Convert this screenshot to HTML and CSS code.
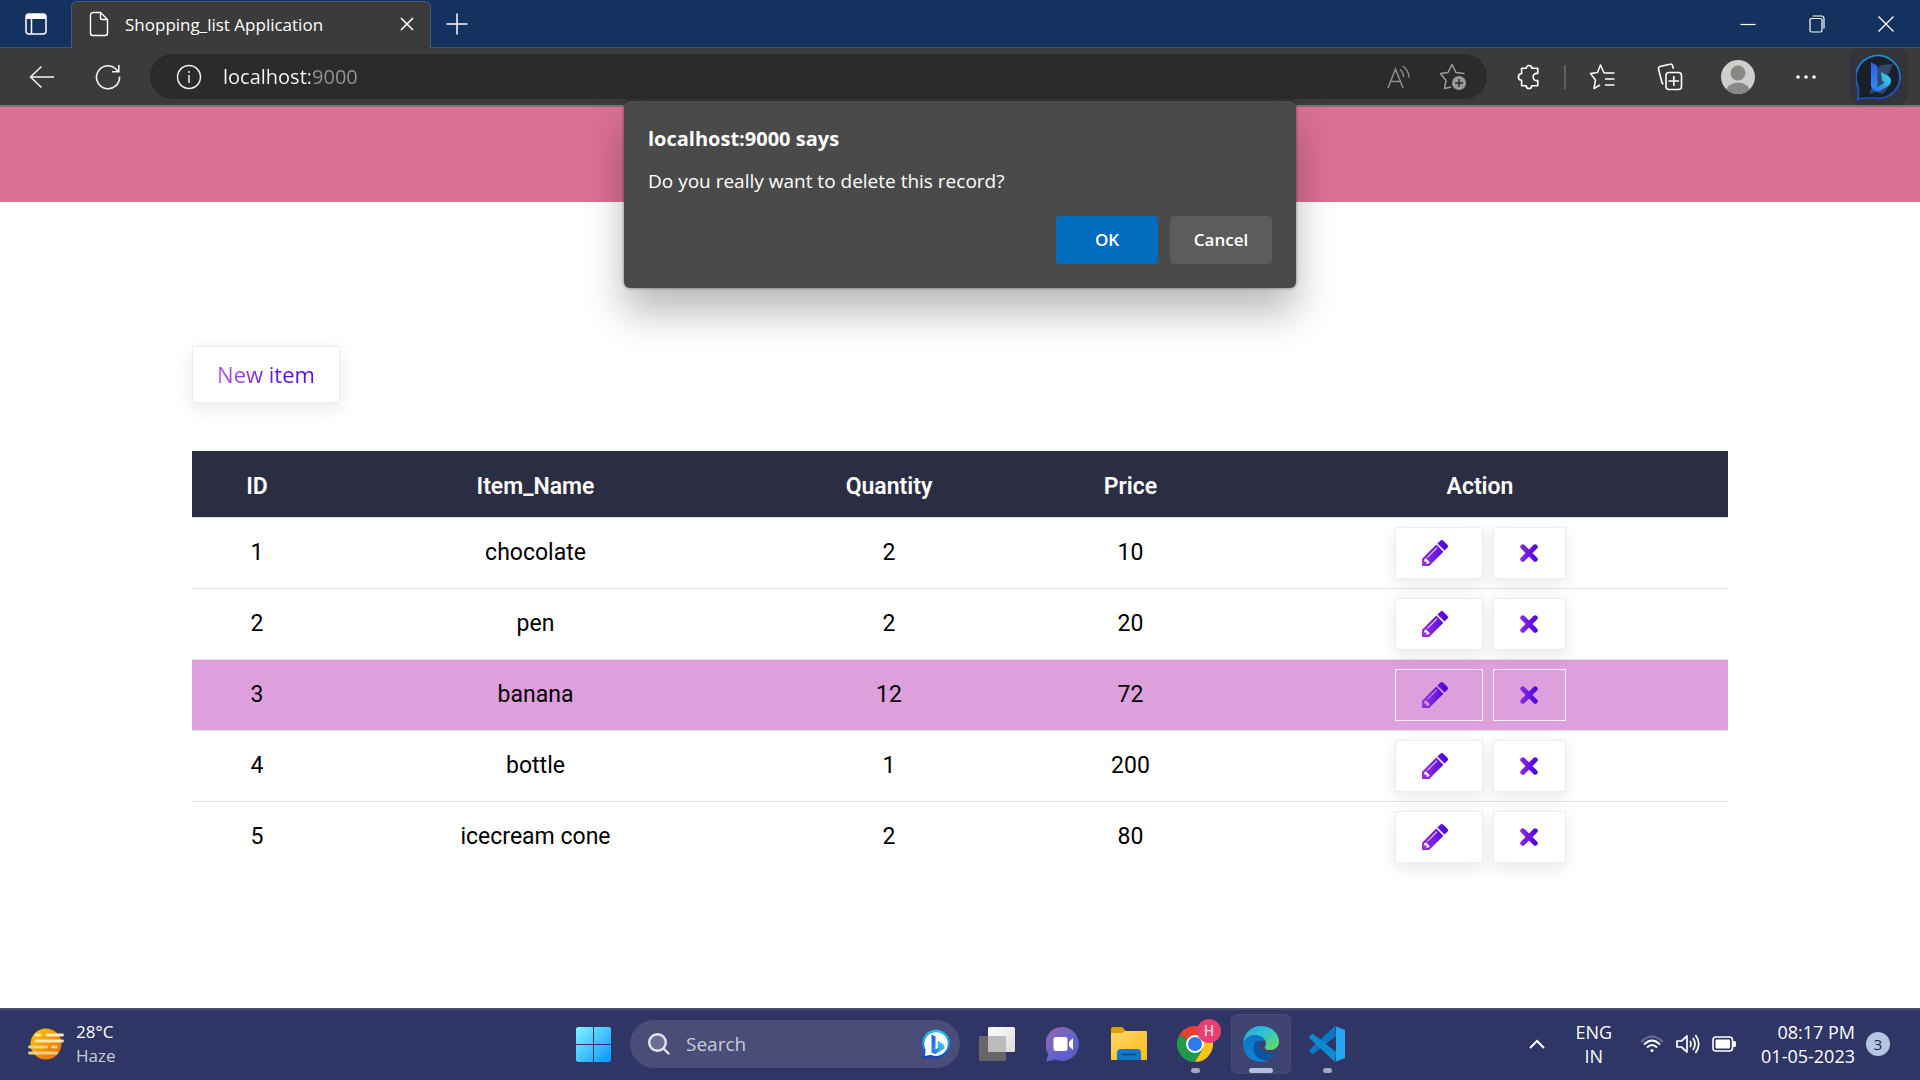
FILE: index.html
```html
<!DOCTYPE html>
<html lang="en">
<head>
<meta charset="utf-8">
<title>Shopping_list Application</title>
<link rel="stylesheet" href="styles.css">
</head>
<body>
<svg class="defs" width="0" height="0" aria-hidden="true">
  <defs>
    <linearGradient id="violet" x1="0" y1="0" x2="1" y2="0"><stop offset="0" stop-color="#9a35dd"/><stop offset="1" stop-color="#4a00e0"/></linearGradient>
    <linearGradient id="violet-x" gradientUnits="userSpaceOnUse" x1="0" y1="0" x2="18" y2="0"><stop offset="0" stop-color="#8e2de2"/><stop offset="1" stop-color="#4a00e0"/></linearGradient>
    <linearGradient id="bing" x1="0" y1="0" x2="0" y2="1"><stop offset="0" stop-color="#1b8fd0"/><stop offset="1" stop-color="#1b48c8"/></linearGradient>
    <linearGradient id="bing-b" x1="0" y1="0" x2="0" y2="1"><stop offset="0" stop-color="#2a5bea"/><stop offset="1" stop-color="#2f8ff5"/></linearGradient>
    <linearGradient id="bing-c" x1="1" y1="0" x2="0" y2="1"><stop offset="0" stop-color="#3fe0e8"/><stop offset="1" stop-color="#2466ee"/></linearGradient>
    <linearGradient id="bubble" x1="0" y1="0" x2="0" y2="1"><stop offset="0" stop-color="#25c4ee"/><stop offset="1" stop-color="#1545c0"/></linearGradient>
    <linearGradient id="sun" x1="0" y1="0" x2="1" y2="1"><stop offset="0" stop-color="#fcd000"/><stop offset="1" stop-color="#e8600a"/></linearGradient>
    <linearGradient id="win" gradientUnits="userSpaceOnUse" x1="0" y1="0" x2="35" y2="35"><stop offset="0" stop-color="#80f4ff"/><stop offset="1" stop-color="#0a94ff"/></linearGradient>
    <linearGradient id="chat" x1="0" y1="0" x2="1" y2="1"><stop offset="0" stop-color="#9c6aa8"/><stop offset="0.5" stop-color="#6a62c8"/><stop offset="1" stop-color="#4f58d0"/></linearGradient>
    <linearGradient id="folder" x1="0" y1="0" x2="1" y2="1"><stop offset="0" stop-color="#ffd96b"/><stop offset="1" stop-color="#fbb917"/></linearGradient>
    <linearGradient id="edge-top" x1="0" y1="0" x2="1" y2="1"><stop offset="0" stop-color="#2a9fe8"/><stop offset="0.45" stop-color="#2fc3d0"/><stop offset="1" stop-color="#6be04a"/></linearGradient>
    <linearGradient id="edge-low" x1="0" y1="0" x2="0" y2="1"><stop offset="0" stop-color="#1272c0"/><stop offset="1" stop-color="#0a86dc"/></linearGradient>
    <linearGradient id="page-white" x1="0" y1="0" x2="1" y2="1"><stop offset="0" stop-color="#fff"/><stop offset="1" stop-color="#dcdcdc"/></linearGradient>
    <symbol id="pencil" viewBox="0 21 1515 1515"><path fill="url(#violet)" d="M363 1408l91-91-235-235-91 91v107h128v128h107zm523-928q0-22-22-22-10 0-17 7l-542 542q-7 7-7 17 0 22 22 22 10 0 17-7l542-542q7-7 7-17zm-54-192l416 416-832 832h-416v-416zm683 96q0 53-37 90l-166 166-416-416 166-165q36-38 90-38 53 0 91 38l235 234q37 39 37 91z"/></symbol>
    <symbol id="cross" viewBox="0 0 18 18"><path fill="none" stroke="url(#violet-x)" stroke-width="5" stroke-linecap="round" d="M2.8 2.8L15.2 15.2M15.2 2.8L2.8 15.2"/></symbol>
  </defs>
</svg>

<div class="tabstrip">
  <button class="tab-actions" aria-label="Tab actions">
    <svg width="22" height="22" viewBox="0 0 22 22" fill="none" stroke="#fff" stroke-width="1.5"><rect x="1" y="1" width="20" height="20" rx="3"/><path d="M6.5 6v15"/><path d="M1 3.5h20" stroke-width="5"/></svg>
  </button>
  <div class="tab">
    <svg width="20" height="26" viewBox="0 0 20 26" fill="none" stroke="#fff" stroke-width="1.4"><path d="M11.500 1.500H4a2.500 2.500 0 0 0-2.500 2.500v18a2.500 2.500 0 0 0 2.500 2.500h12a2.500 2.500 0 0 0 2.500-2.500V8.500zV7a1.500 1.500 0 0 0 1.500 1.500h5.500"/></svg>
    <span class="tab-title">Shopping_list Application</span>
    <button aria-label="Close tab"><svg width="14" height="14" viewBox="0 0 14 14" stroke="#fff" stroke-width="1.6"><path d="M1 1l12 12M13 1L1 13"/></svg></button>
  </div>
  <button class="new-tab" aria-label="New tab"><svg width="22" height="22" viewBox="0 0 22 22" stroke="#fff" stroke-width="1.5"><path d="M11 0.500v21M0.500 11h21"/></svg></button>
  <div class="window-buttons">
    <button aria-label="Minimize"><svg width="16" height="16" viewBox="0 0 16 16" stroke="#fff" stroke-width="1.200"><path d="M0.500 8.500h15"/></svg></button>
    <button aria-label="Restore"><svg width="16" height="18" viewBox="0 0 16 18" fill="none" stroke="#fff" stroke-width="1.200"><rect x="1" y="3.500" width="12" height="13.500" rx="1.500"/><path d="M3.500 1h9a2.500 2.500 0 0 1 2.500 2.500v10"/></svg></button>
    <button aria-label="Close"><svg width="16" height="18" viewBox="0 0 16 18" stroke="#fff" stroke-width="1.300"><path d="M0.500 1.500l15 15M15.500 1.500l-15 15"/></svg></button>
  </div>
</div>

<div class="toolbar">
  <button aria-label="Back"><svg width="26" height="24" viewBox="0 0 26 24" fill="none" stroke="#f5f5f5" stroke-width="1.500"><path d="M25 12H1.500M12.500 1.500L1.500 12l11 10.500"/></svg></button>
  <button aria-label="Refresh"><svg width="26" height="26" viewBox="0 0 26 26" fill="none" stroke="#f5f5f5" stroke-width="1.600"><path d="M24.500 12.500A11.500 11.500 0 1 1 20.500 4.500L23 7.500M23.800 1v6.800H17"/></svg></button>
  <div class="address">
    <svg width="26" height="26" viewBox="0 0 26 26" fill="none" stroke="#f0f0f0" stroke-width="1.500"><circle cx="13" cy="13" r="11.500"/><path d="M13 11v8M13 7v2"/></svg>
    <input class="url" type="text" aria-label="Address" value="localhost:9000">
    <button aria-label="Read aloud"><svg width="24" height="24" viewBox="0 0 24 24" fill="none" stroke="#8f8f8f" stroke-width="1.500"><path d="M1 23L8.500 4 16 23M3.800 16.500h9.500M13 4.500q3.500 3 3.500 7.500M15.500 1q6.500 4.500 6.500 11.500"/></svg></button>
    <button aria-label="Add to favorites"><svg width="28" height="28" viewBox="0 0 28 28" fill="none" stroke="#9a9a9a" stroke-width="1.500" stroke-linejoin="round"><path d="M12 24l-6.500 1.500L7 17.500 1.500 10.500l7.500-1L13 1.500l4 8 8.500 1"/><circle cx="20" cy="20" r="7" fill="#9a9a9a" stroke="none"/><path d="M20 16v8M16 20h8" stroke="#2b2b2b"/></svg></button>
  </div>
  <button class="extensions" aria-label="Extensions"><svg width="24" height="26" viewBox="0 0 26 28" fill="none" stroke="#fff" stroke-width="1.800" stroke-linejoin="round"><path d="M5 4.500h5a3 3 0 0 1 6 0h6.500v5.500h-1a4 4 0 0 0 0 8h1v5.500H16a3 3 0 0 1-6 0H5v-6a3.500 3.500 0 0 1 0-7z"/></svg></button>
  <span class="divider"></span>
  <div class="tools">
    <button aria-label="Favorites"><svg width="26" height="28" viewBox="0 0 26 28" fill="none" stroke="#fff" stroke-width="1.500" stroke-linejoin="round"><path d="M15 10L11.500 2 8.500 9.500 1.500 10.500 6.500 17 5 25.500l6-3.500M15 10h10.500M16 16h9.500M16 22h9.500"/></svg></button>
    <button aria-label="Collections"><svg width="26" height="28" viewBox="0 0 26 28" fill="none" stroke="#fff" stroke-width="1.600" stroke-linejoin="round"><rect x="9" y="9.500" width="15.500" height="17" rx="3"/><path d="M16.800 13v10M11.500 18h10.500M6.500 21a2 2 0 0 1-1.500-1.500L1.500 6a2 2 0 0 1 1.500-2.500L13 1.200a2 2 0 0 1 2.500 1.500l1 3"/></svg></button>
    <button aria-label="Profile"><svg width="34" height="34" viewBox="0 0 34 34"><clipPath id="av"><circle cx="17" cy="17" r="17"/></clipPath><g clip-path="url(#av)"><path fill="#d0cecb" d="M0 0h34v34H0z"/><circle cx="17" cy="13" r="7.500" fill="#8a8886"/><ellipse cx="17" cy="32" rx="12" ry="9.500" fill="#8a8886"/></g></svg></button>
    <button aria-label="Settings and more"><svg width="20" height="6" viewBox="0 0 20 6" fill="#fff"><circle cx="2" cy="3" r="1.800"/><circle cx="10" cy="3" r="1.800"/><circle cx="18" cy="3" r="1.800"/></svg></button>
    <button class="bing" aria-label="Discover"><svg width="46" height="46" viewBox="0 0 46 46"><path fill="#1b1f2b" stroke="url(#bing)" stroke-width="1.800" d="M1.500 45q2-7 0-14A22 21.500 0 1 1 23 44.500c-8-1.500-14 0-21.500.5z"/><path fill="#2f4a66" d="M13 40l6-14-2-8 8-7 12-1-6 14 4 6-8 10-8-2z"/><path fill="url(#bing-b)" d="M15 8l6.500 4v20l-3 4-3.500-3.500z"/><path fill="url(#bing-c)" d="M25 18l8 4.500q4 4 0 9L24 37q-6 1.500-8.500-3.500 5 1.500 13-5l-2.500-2z"/></svg></button>
  </div>
</div>

<div class="page">
  <header class="banner"></header>
  <main class="content">
    <button class="ghost new-item"><span>New item</span></button>
    <table class="items">
      <colgroup><col class="c-id"><col class="c-name"><col class="c-qty"><col class="c-price"><col class="c-action"></colgroup>
      <thead><tr><th>ID</th><th>Item_Name</th><th>Quantity</th><th>Price</th><th>Action</th></tr></thead>
      <tbody>
        <tr><td>1</td><td>chocolate</td><td>2</td><td>10</td><td><div class="actions"><button class="ghost edit" aria-label="Edit chocolate"><svg width="26" height="26"><use href="#pencil"/></svg></button><button class="ghost delete" aria-label="Delete chocolate"><svg width="18" height="18"><use href="#cross"/></svg></button></div></td></tr>
        <tr><td>2</td><td>pen</td><td>2</td><td>20</td><td><div class="actions"><button class="ghost edit" aria-label="Edit pen"><svg width="26" height="26"><use href="#pencil"/></svg></button><button class="ghost delete" aria-label="Delete pen"><svg width="18" height="18"><use href="#cross"/></svg></button></div></td></tr>
        <tr class="active"><td>3</td><td>banana</td><td>12</td><td>72</td><td><div class="actions"><button class="ghost edit" aria-label="Edit banana"><svg width="26" height="26"><use href="#pencil"/></svg></button><button class="ghost delete" aria-label="Delete banana"><svg width="18" height="18"><use href="#cross"/></svg></button></div></td></tr>
        <tr><td>4</td><td>bottle</td><td>1</td><td>200</td><td><div class="actions"><button class="ghost edit" aria-label="Edit bottle"><svg width="26" height="26"><use href="#pencil"/></svg></button><button class="ghost delete" aria-label="Delete bottle"><svg width="18" height="18"><use href="#cross"/></svg></button></div></td></tr>
        <tr><td>5</td><td>icecream cone</td><td>2</td><td>80</td><td><div class="actions"><button class="ghost edit" aria-label="Edit icecream cone"><svg width="26" height="26"><use href="#pencil"/></svg></button><button class="ghost delete" aria-label="Delete icecream cone"><svg width="18" height="18"><use href="#cross"/></svg></button></div></td></tr>
      </tbody>
    </table>
  </main>
</div>

<dialog class="confirm" open aria-labelledby="confirm-title">
  <h2 id="confirm-title">localhost:9000 says</h2>
  <p>Do you really want to delete this record?</p>
  <div class="confirm-buttons"><button class="primary">OK</button><button>Cancel</button></div>
</dialog>

<footer class="taskbar">
  <button class="weather">
    <svg width="36" height="36" viewBox="0 0 36 36"><circle cx="18" cy="18" r="15.500" fill="url(#sun)"/><path fill="none" stroke="#fbe7b0" stroke-width="2.800" stroke-linecap="round" d="M8 9h4M19 9h15.500M8 15h26.500"/><path fill="none" stroke="#f0cf80" stroke-width="2.800" stroke-linecap="round" d="M1.500 21h17M24.500 21h4M1.500 27h27"/></svg>
    <span class="lines"><span>28°C</span><span class="dim">Haze</span></span>
  </button>
  <div class="apps">
    <button aria-label="Start"><svg width="35" height="35" viewBox="0 0 35 35" fill="url(#win)"><path d="M1.500 0H17v17H0V1.500zM18 0h15.500L35 1.500V17H18zM0 18h17v17H1.500L0 33.500zM18 18h17v15.500L33.500 35H18z"/></svg></button>
    <label class="search">
      <svg width="22" height="22" viewBox="0 0 22 22" fill="none" stroke="#e4e4ea" stroke-width="2.400" stroke-linecap="round"><circle cx="9.500" cy="9.500" r="8.300" fill="#6b6e92"/><path d="M15.500 15.500l5 5"/></svg>
      <input type="text" placeholder="Search" aria-label="Search">
      <svg width="30" height="30" viewBox="0 0 30 30"><path fill="#fff" stroke="url(#bubble)" stroke-width="2.400" d="M1.500 28.500l1-7.500A13 13 0 1 1 9 27z"/><path fill="url(#bing-b)" d="M9.500 5.500l4 2v14l-4 3z"/><path fill="url(#bing-c)" d="M15.500 11.500l7 4.500v3.500l-9 5.500q-3 0-4-3l6.500-3z"/></svg>
    </label>
    <button aria-label="Task view"><svg width="36" height="34" viewBox="0 0 36 34"><rect y="9" width="27" height="25" rx="1.500" fill="#666"/><rect x="9" width="27" height="25" rx="1.500" fill="url(#page-white)"/><path fill="#bcbcbc" d="M9 9h18v16H9z"/></svg></button>
    <button aria-label="Chat"><svg width="34" height="35" viewBox="0 0 34 35"><path fill="url(#chat)" d="M17 0a17 17 0 1 1-8 32.500L1 34.500q-1 0-.5-1.500L2.500 27A17 17 0 0 1 17 0z"/><rect x="7.500" y="10" width="14" height="14" rx="2.500" fill="#fff"/><path fill="#fff" d="M23 15l4-4v12l-4-4z"/></svg></button>
    <button aria-label="File Explorer"><svg width="36" height="34" viewBox="0 0 36 34"><path fill="#e0a000" d="M0 2q0-2 2-2h9l4 4v5H0z"/><path fill="url(#folder)" d="M0 6h11l4-2h20q1 0 1 1v28H0z"/><path fill="#0f78cc" d="M6 33v-7q0-4 4-4h16q4 0 4 4v7z"/><path stroke="#104a80" stroke-width="1.600" d="M11 27.500h14"/></svg></button>
    <button class="running" aria-label="Google Chrome"><svg width="36" height="36" viewBox="0 0 36 36"><path fill="#e8402f" d="M18 18L2.400 9A18 18 0 0 1 33.600 9z"/><path fill="#229a48" d="M18 18l8 4.500L18 36A18 18 0 0 1 2.400 9z"/><path fill="#fcc31a" d="M18 9h15.600A18 18 0 0 1 18 36l8-13.500z"/><circle cx="18" cy="18" r="9" fill="#fff"/><circle cx="18" cy="18" r="7" fill="#2f78ee"/></svg><span class="profile">H</span></button>
    <button class="running current" aria-label="Microsoft Edge"><svg width="36" height="36" viewBox="0 0 36 36"><path fill="url(#edge-low)" d="M0 18C1 10 8 7 13 8c6 .5 9 4 9 7-6-2-10 2-10 7 0 7 6 13 13 13-3 1-7 1-10 .5C6 34 0 27 0 18z"/><path fill="#0b55a2" d="M14 15c-5 3-5 11 0 16 5 4.500 11 4 15 .5 2-1.500 3-3 4-4.500q.5-1-1-.5c-8 3-16-2-16-7 0-2 .5-3 1-4.500z"/><path fill="url(#edge-top)" d="M0 17C1 7 8 0 18 0c11 0 18 8 18 15.500C36 21 32 24 27.500 24c-4 0-6.500-1.500-5.500-3 3-5-1-11-8.500-12C7 8.500 2 12 0 17z"/></svg></button>
    <button class="running" aria-label="Visual Studio Code"><svg width="36" height="36" viewBox="0 0 36 36"><path fill="#0b78c4" d="M26 0L.8 23.500q-1.300 1.200 0 2.500L2.500 27.500q1 1 2.300 0L27 10z"/><path fill="#1089d4" d="M26 36L.8 12.500q-1.300-1.200 0-2.500L2.500 8.500q1-1 2.300 0L27 26z"/><path fill="#27a5f0" d="M26 0l10 4v28l-10 4q1-.5 1-2V2q0-1.500-1-2z"/></svg></button>
  </div>
  <div class="tray">
    <button class="more" aria-label="Show hidden icons"><svg width="16" height="10" viewBox="0 0 16 10" fill="none" stroke="#fff" stroke-width="2"><path d="M1 9l7-7 7 7"/></svg></button>
    <button class="lines language"><span>ENG</span><span>IN</span></button>
    <button class="status" aria-label="Network, volume, battery">
      <svg width="24" height="18" viewBox="0 0 24 18" fill="none" stroke="#fff" stroke-width="1.800"><path stroke="#6b6f94" d="M1 7q11-11 22 0"/><path d="M4 9.500q8-8 16 0M7 12.500q5-5 10 0"/><circle cx="12" cy="15.500" r="1.600" fill="#fff" stroke="none"/></svg>
      <svg width="24" height="22" viewBox="0 0 24 22" fill="none" stroke="#fff" stroke-width="1.700" stroke-linejoin="round"><path d="M1 8h4.500L11 3v16l-5.500-5H1zM14 8q2 3 0 6M17 5q4 6 0 12M19.500 2q6.500 9 0 18"/></svg>
      <svg width="24" height="16" viewBox="0 0 24 16"><rect x="1" y="1" width="19.500" height="14" rx="3" fill="none" stroke="#fff" stroke-width="1.600"/><rect x="3.500" y="3.500" width="14.500" height="9" rx="1" fill="#fff"/><path fill="#fff" d="M21 5h1.500q1.500 0 1.500 1.500v3q0 1.500-1.500 1.500H21z"/></svg>
    </button>
    <button class="lines clock"><span>08:17 PM</span><span>01-05-2023</span></button>
    <button class="count" aria-label="3 notifications">3</button>
  </div>
</footer>
</body>
</html>
```
FILE: styles.css
```css
* { box-sizing: border-box; }

body {
  margin: 0;
  min-height: 100vh;
  display: flex;
  flex-direction: column;
  position: relative;
  background: #fff;
  color: #fff;
  font-family: "Open Sans", "Noto Sans", sans-serif;
  font-size: 17px;
}

.defs { position: absolute; }

svg { display: block; flex: none; }

button {
  margin: 0;
  padding: 0;
  border: 0;
  background: none;
  color: inherit;
  font: inherit;
  display: flex;
  align-items: center;
  justify-content: center;
}

input {
  min-width: 0;
  padding: 0;
  border: 0;
  outline: 0;
  background: none;
  color: inherit;
  font: inherit;
}

/* Tab strip */
.tabstrip {
  display: flex;
  height: 48px;
  background: #133260;
  border-bottom: 1px solid #3d5170;
}
.tab-actions { width: 71px; }
.tab {
  width: 360px;
  height: 47px;
  margin: 1px 0 -1px;
  padding: 0 16px 2px 17px;
  display: flex;
  align-items: center;
  gap: 16px;
  background: #3b3b3b;
  border: 1px solid #4a5a78;
  border-bottom: 0;
  border-radius: 6px 6px 0 0;
}
.tab-title { flex: 1; }
.new-tab { width: 52px; }
.window-buttons { margin-left: auto; display: flex; }
.window-buttons button { width: 69px; }

/* Toolbar */
.toolbar {
  display: flex;
  align-items: center;
  height: 59px;
  padding: 0 12px 0 18px;
  background: #3b3b3b;
  border-bottom: 2px solid #767676;
}
.toolbar > button { width: 48px; height: 48px; margin-right: 18px; }
.address {
  flex: 1;
  height: 45px;
  padding: 0 10px 0 26px;
  display: flex;
  align-items: center;
  border-radius: 23px;
  background: #2b2b2b;
}
.address button { width: 48px; height: 44px; margin-left: 6px; }
.url {
  flex: 1;
  margin-left: 21px;
  font-size: 20px;
  color: transparent;
  background: linear-gradient(90deg, #fff 87px, #949494 87px);
  background-clip: text;
  -webkit-background-clip: text;
}
.toolbar > .extensions { margin: 0 0 0 18px; }
.divider { width: 2px; height: 24px; margin: 0 12px 0 11px; background: #606060; }
.tools { display: flex; align-items: center; gap: 20px; }
.tools button { width: 48px; height: 48px; }
.tools .bing { width: 58px; height: 57px; border-radius: 10px; background: #33343a; }

/* Page */
.page { flex: 1; background: #fff; color: #000; }
.banner { height: 95px; background: #db7093; }
.content { width: 80%; margin: 0 auto; padding: 144px 0 48px; }

.ghost {
  background: transparent;
  border: 1px solid #e7eef4;
  box-shadow: 0 5px 15px rgba(50, 70, 90, 0.12);
}
.new-item { width: 148px; height: 57px; margin-bottom: 48px; padding-bottom: 2px; font-size: 22px; background: #fff; }
.new-item span {
  color: transparent;
  background: linear-gradient(90deg, #b05ae6, #5a0ce0 70%, #5a0ce0);
  background-clip: text;
  -webkit-background-clip: text;
}

.items {
  width: 100%;
  table-layout: fixed;
  border-collapse: collapse;
  font-family: Roboto, sans-serif;
  font-size: 23px;
  text-align: center;
}
.c-id { width: 130px; }
.c-name { width: 427px; }
.c-qty { width: 280px; }
.c-price { width: 203px; }
.c-action { width: 496px; }
.items th { height: 66px; padding: 6px 0 0; background: #2b2d42; color: #fff; font-weight: 600; }
.items td { height: 71px; padding: 0; border-top: 1px solid #dee2e6; font-weight: 400; }
.items .active { background: #dda0dd; }
.actions { display: flex; justify-content: center; gap: 10px; }
.actions .ghost { height: 52px; background: #fff; }
.actions .edit { width: 88px; padding-left: 26px; justify-content: flex-start; }
.actions .delete { width: 73px; }
.active .actions .ghost { background: transparent; border-color: #f3f3fa; box-shadow: none; }

/* Confirmation dialog */
.confirm {
  position: absolute;
  top: 101px;
  left: 0;
  right: 0;
  width: 672px;
  margin: 0 auto;
  padding: 22px 24px 24px;
  border: 0;
  border-radius: 6px;
  background: #4a4a4a;
  color: #fff;
  box-shadow: 0 0 3px rgba(0, 0, 0, 0.5), 0 24px 40px rgba(0, 0, 0, 0.28);
}
.confirm h2 { margin: 0 0 12px; font-size: 20px; line-height: 32px; font-weight: 700; }
.confirm p { margin: 0 0 21px; font-size: 19px; line-height: 28px; }
.confirm-buttons { display: flex; justify-content: flex-end; gap: 12px; }
.confirm button { width: 102px; height: 48px; padding-bottom: 2px; border-radius: 4px; background: #5c5c5c; font-weight: 600; }
.confirm .primary { background: #006cbe; }

/* Taskbar */
.taskbar {
  display: grid;
  grid-template-columns: 1fr auto 1fr;
  align-items: center;
  height: 72px;
  padding-bottom: 2px;
  background: #2f3565;
  border-top: 2px solid #4a4d70;
}
.lines { display: flex; flex-direction: column; align-items: center; line-height: 24px; }
.weather { justify-self: start; margin-left: 28px; gap: 12px; }
.weather .lines { align-items: flex-start; }
.dim { color: #c9cbda; }
.apps { display: flex; gap: 6px; align-items: center; }
.apps > button { position: relative; width: 60px; height: 60px; }
.search {
  width: 330px;
  height: 48px;
  margin: 0 1px;
  padding: 0 8px 0 18px;
  display: flex;
  align-items: center;
  gap: 16px;
  border-radius: 24px;
  background: #494d78;
}
.search input { flex: 1; font-size: 19px; }
.search input::placeholder { color: #c9cbda; opacity: 1; }
.running::after {
  content: "";
  position: absolute;
  bottom: 1px;
  left: 50%;
  width: 9px;
  margin-left: -4px;
  height: 5px;
  border-radius: 3px;
  background: #a4a6bf;
}
.current { border: 1px solid #474b76; border-radius: 6px; background: #3e436f; }
.current::after { bottom: 0; width: 24px; margin-left: -12px; background: #afc3de; }
.profile {
  position: absolute;
  top: 5px;
  right: 4px;
  width: 24px;
  border-radius: 12px;
  background: #e83e70;
  color: #fbd5e2;
  font-family: Roboto, sans-serif;
  font-size: 14px;
  line-height: 24px;
  font-weight: 500;
}
.tray { display: flex; align-items: center; justify-content: flex-end; padding-right: 30px; }
.more { width: 48px; height: 48px; margin-right: 14px; }
.language { margin-right: 28px; }
.status { gap: 12px; margin-right: 25px; }
.language, .clock { font-size: 18px; }
.clock { align-items: flex-end; margin-right: 11px; }
.count { width: 24px; height: 24px; border-radius: 12px; background: #b4c6e0; color: #20264a; font-size: 15px; }
```
